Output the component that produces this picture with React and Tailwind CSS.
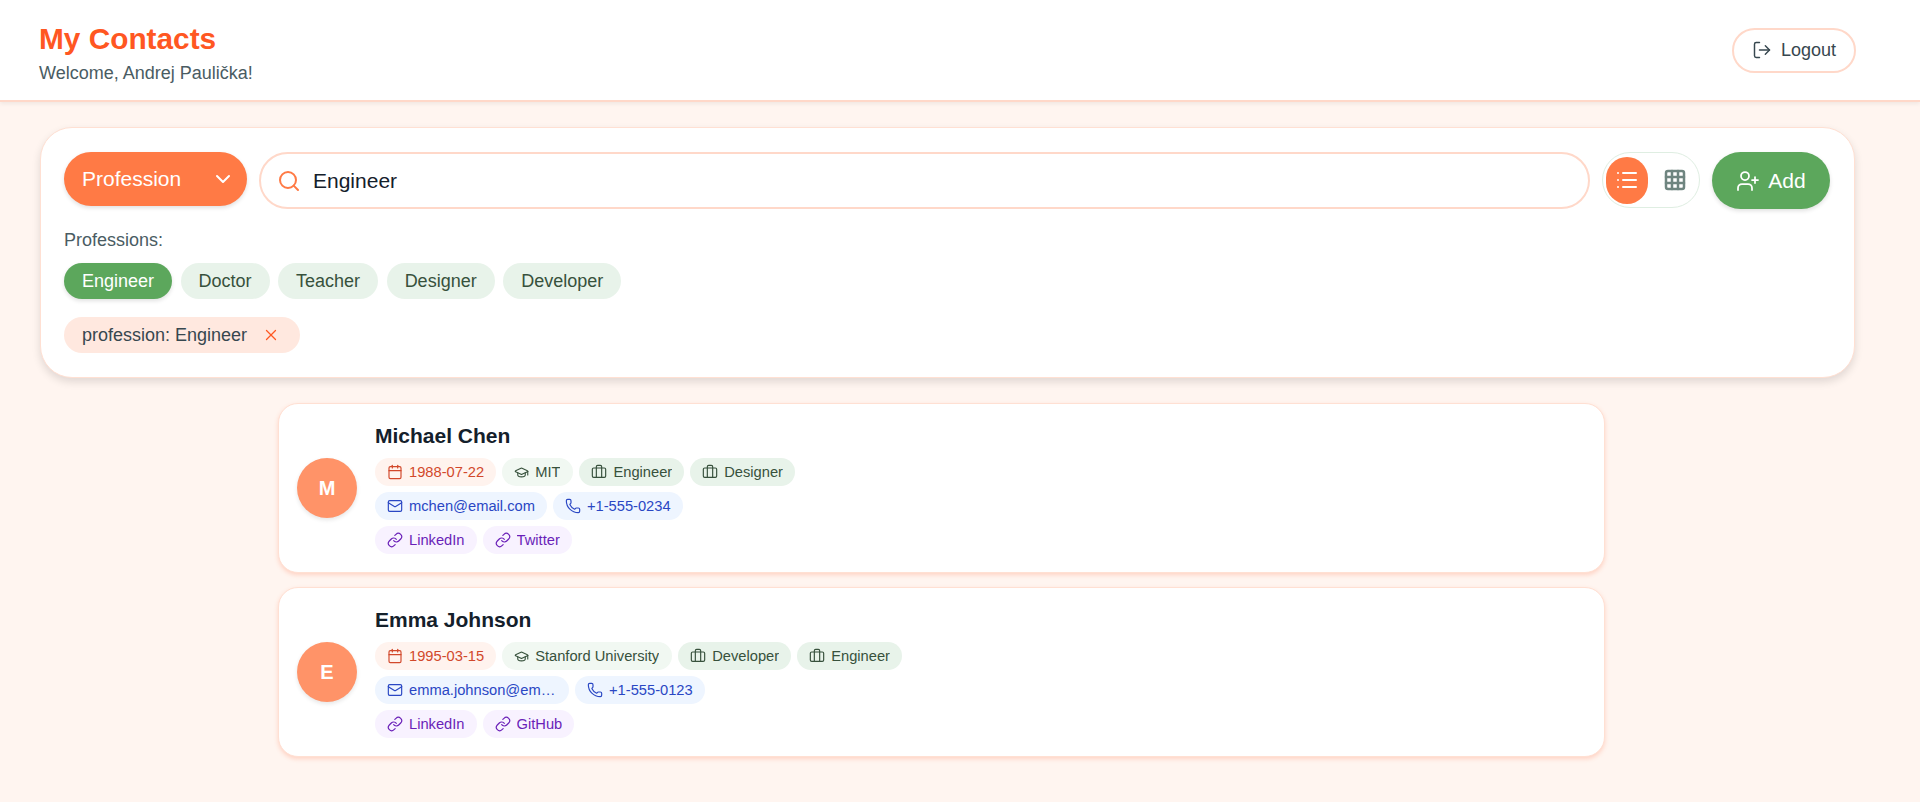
import React from 'react';
import { LogOut, Search, ChevronDown, List, Grid3x3, UserPlus, X, Calendar, GraduationCap, Briefcase, Mail, Phone, Link } from 'lucide-react';

const contacts = [
  {
    initial: 'M',
    name: 'Michael Chen',
    date: '1988-07-22',
    school: 'MIT',
    professions: ['Engineer', 'Designer'],
    email: 'mchen@email.com',
    phone: '+1-555-0234',
    links: ['LinkedIn', 'Twitter'],
  },
  {
    initial: 'E',
    name: 'Emma Johnson',
    date: '1995-03-15',
    school: 'Stanford University',
    professions: ['Developer', 'Engineer'],
    email: 'emma.johnson@email.com',
    phone: '+1-555-0123',
    links: ['LinkedIn', 'GitHub'],
  },
];

const Chip = ({ icon: Icon, size = 16, className, children }) => (
  <span className={`flex h-[28px] items-center gap-[6px] rounded-full px-[12px] text-[14.7px] ${className}`}>
    <Icon size={size} strokeWidth={1.75} className="shrink-0" />
    <span className="truncate">{children}</span>
  </span>
);

const ContactCard = ({ contact }) => (
  <div className="flex h-[170px] items-center gap-[18px] rounded-[20px] border border-[#ffe0d3] bg-white pl-[18px] shadow-[0_2px_4px_rgba(255,112,67,0.25)]">
    <div className="flex h-[60px] w-[60px] items-center justify-center rounded-full bg-[#ff9368] text-[20px] font-bold text-white shadow-[0_2px_4px_rgba(0,0,0,0.1)]">
      {contact.initial}
    </div>
    <div className="pt-[2px]">
      <h3 className="mb-[10px] text-[21px] font-bold leading-[24px] text-[#14202b]">{contact.name}</h3>
      <div className="flex flex-col gap-[6px]">
        <div className="flex gap-[6px]">
          <Chip icon={Calendar} className="bg-[#fff3ee] text-[#d2482b]">{contact.date}</Chip>
          <Chip icon={GraduationCap} size={15} className="bg-[#f1f8f2] pr-[13px] text-[#37513c]">{contact.school}</Chip>
          {contact.professions.map((p) => (
            <Chip key={p} icon={Briefcase} className="bg-[#e8f3ea] text-[#37513c]">{p}</Chip>
          ))}
        </div>
        <div className="flex gap-[6px]">
          <Chip icon={Mail} className="max-w-[194px] bg-[#eef5ff] text-[#2a47c4]">{contact.email}</Chip>
          <Chip icon={Phone} className="bg-[#eef5ff] text-[#2a47c4]">{contact.phone}</Chip>
        </div>
        <div className="flex gap-[6px]">
          {contact.links.map((l) => (
            <Chip key={l} icon={Link} className="bg-[#f8f2ff] text-[#6a1fb8]">{l}</Chip>
          ))}
        </div>
      </div>
    </div>
  </div>
);

export default function App() {
  return (
    <div className="min-h-screen bg-[#fff5f0] font-['Liberation_Sans',Arial,sans-serif]">
      <header className="flex h-[102px] items-center justify-between border-b-2 border-[#ffd8c9] bg-white pl-[39px] pr-[64px] shadow-[0_2px_4px_rgba(0,0,0,0.06)]">
        <div className="pt-[4px]">
          <h1 className="text-[29.8px] font-bold leading-[36px] text-[#ff5722]">My Contacts</h1>
          <p className="mt-[5px] text-[18px] leading-[22px] text-[#4a5c63]">Welcome, Andrej Paulička!</p>
        </div>
        <button className="flex h-[45px] w-[124px] items-center justify-center gap-[9px] rounded-full border-2 border-[#ffd8c9] text-[18px] text-[#37474f]">
          <LogOut size={20} strokeWidth={1.75} />
          Logout
        </button>
      </header>

      <main className="pt-[25px]">
        <section className="ml-[40px] mr-[65px] rounded-[32px] border border-[#ffe0d3] bg-white pb-[24px] pl-[23px] pr-[24px] pt-[24px] shadow-[0_4px_8px_rgba(0,0,0,0.12)]">
          <div className="flex gap-[12px]">
            <div className="flex h-[54px] w-[183px] items-center justify-between rounded-full bg-[#ff7a45] pl-[18px] pr-[12px] text-[21px] text-white shadow-[0_2px_4px_rgba(0,0,0,0.12)]">
              Profession
              <ChevronDown size={24} strokeWidth={2} />
            </div>
            <div className="flex h-[57px] flex-1 items-center gap-[12px] rounded-full border-2 border-[#ffd8c9] pl-[16px] text-[21px] text-[#14202b]">
              <Search size={24} strokeWidth={2} className="text-[#ff7a45]" />
              Engineer
            </div>
            <div className="flex h-[56px] w-[98px] items-center gap-[15px] rounded-full border border-[#dfeee2] px-[3px]">
              <div className="flex h-[47px] w-[42px] items-center justify-center rounded-full bg-[#ff7a45] text-white">
                <List size={24} strokeWidth={2} />
              </div>
              <Grid3x3 size={24} strokeWidth={2.5} className="text-[#6f8580]" />
            </div>
            <button className="flex h-[57px] w-[118px] items-center justify-center gap-[8px] rounded-full bg-[#5ca75c] text-[21px] text-white shadow-[0_2px_4px_rgba(0,0,0,0.12)]">
              <UserPlus size={24} strokeWidth={1.75} />
              Add
            </button>
          </div>
          <p className="mt-[20px] text-[18px] leading-[22px] text-[#4a5c63]">Professions:</p>
          <div className="mt-[12px] flex gap-[8.5px]">
            {['Engineer', 'Doctor', 'Teacher', 'Designer', 'Developer'].map((p, i) => (
              <span
                key={p}
                className={`flex h-[36px] items-center rounded-full px-[18px] text-[18px] ${i === 0 ? 'bg-[#5ca75c] text-white shadow-[0_2px_4px_rgba(0,0,0,0.12)]' : 'bg-[#e8f3ea] text-[#37513c]'}`}
              >
                {p}
              </span>
            ))}
          </div>
          <div className="mt-[18px] flex">
            <span className="flex h-[36px] items-center gap-[15px] rounded-full bg-[#ffe8df] pl-[18px] pr-[20px] text-[18px] text-[#37474f]">
              profession: Engineer
              <X size={18} strokeWidth={1.75} className="text-[#ff5722]" />
            </span>
          </div>
        </section>

        <div className="ml-[278px] mt-[25px] flex w-[1327px] flex-col gap-[14px]">
          {contacts.map((c) => (
            <ContactCard key={c.name} contact={c} />
          ))}
        </div>
      </main>
    </div>
  );
}
